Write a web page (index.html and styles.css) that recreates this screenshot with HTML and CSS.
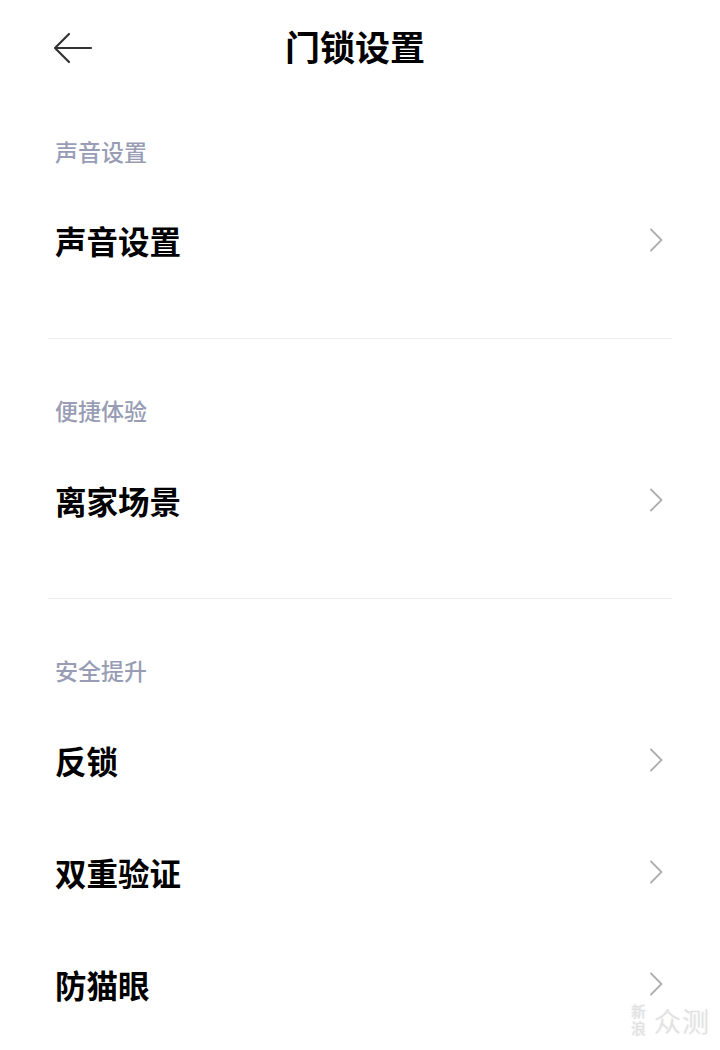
FILE: index.html
```html
<!DOCTYPE html>
<html lang="zh-CN">
<head>
    <meta charset="UTF-8">
    <meta name="viewport" content="width=device-width, initial-scale=1.0">
    <title>门锁设置</title>
    <link rel="stylesheet" href="styles.css">
</head>
<body>
    <div class="page">
        <div class="nav">
            <button class="back" type="button">
                <svg width="40" height="32" viewBox="0 0 40 32">
                    <path d="M2 16 H38 M16 2 L2 16 L16 30" fill="none" stroke="#333" stroke-width="2.2" stroke-linecap="round" stroke-linejoin="round"/>
                </svg>
            </button>
            <h1>门锁设置</h1>
        </div>

        <div class="section first">
            <div class="section-title">声音设置</div>
            <div class="item"><span>声音设置</span><svg class="chevron" width="14" height="24" viewBox="0 0 14 24"><path d="M2 1.5 L12.5 12 L2 22.5" fill="none" stroke="#aeaeae" stroke-width="1.8" stroke-linecap="round" stroke-linejoin="round"/></svg></div>
        </div>

        <div class="section">
            <div class="section-title">便捷体验</div>
            <div class="item"><span>离家场景</span><svg class="chevron" width="14" height="24" viewBox="0 0 14 24"><path d="M2 1.5 L12.5 12 L2 22.5" fill="none" stroke="#aeaeae" stroke-width="1.8" stroke-linecap="round" stroke-linejoin="round"/></svg></div>
        </div>

        <div class="section">
            <div class="section-title">安全提升</div>
            <div class="item"><span>反锁</span><svg class="chevron" width="14" height="24" viewBox="0 0 14 24"><path d="M2 1.5 L12.5 12 L2 22.5" fill="none" stroke="#aeaeae" stroke-width="1.8" stroke-linecap="round" stroke-linejoin="round"/></svg></div>
            <div class="item"><span>双重验证</span><svg class="chevron" width="14" height="24" viewBox="0 0 14 24"><path d="M2 1.5 L12.5 12 L2 22.5" fill="none" stroke="#aeaeae" stroke-width="1.8" stroke-linecap="round" stroke-linejoin="round"/></svg></div>
            <div class="item"><span>防猫眼</span><svg class="chevron" width="14" height="24" viewBox="0 0 14 24"><path d="M2 1.5 L12.5 12 L2 22.5" fill="none" stroke="#aeaeae" stroke-width="1.8" stroke-linecap="round" stroke-linejoin="round"/></svg></div>
        </div>

        <div class="watermark">
            <span class="wm-small">新浪</span>
            <span class="wm-big">众测</span>
        </div>
    </div>
</body>
</html>
```

FILE: styles.css
```css
body {
    margin: 0;
    background: #fff;
    font-family: "Noto Sans CJK SC", "Noto Sans", sans-serif;
    color: #000;
}
.page {
    position: relative;
    width: 720px;
    height: 1050px;
    overflow: hidden;
}
.nav {
    position: relative;
    height: 81px;
    padding-top: 22px;
    box-sizing: border-box;
}
.nav h1 {
    margin: 0;
    font-size: 35px;
    font-weight: 700;
    line-height: 48px;
    text-align: center;
    padding-right: 10px;
}
.back {
    position: absolute;
    left: 53px;
    top: 32px;
    padding: 0;
    border: none;
    background: none;
    line-height: 0;
}
.section {
    margin: 0 48px;
    border-top: 1px solid #ececec;
    padding: 59px 0 42px;
}
.section.first {
    border-top: none;
    padding-top: 58px;
}
.section-title {
    padding: 0 7px;
    font-size: 23px;
    line-height: 24px;
    font-weight: 500;
    color: #989db5;
    margin-bottom: 22px;
}
.section.first .section-title {
    margin-bottom: 21px;
}
.item {
    height: 112px;
    display: flex;
    align-items: center;
    justify-content: space-between;
    padding: 0 9px 0 7px;
    font-size: 31.5px;
    font-weight: 700;
}
.watermark {
    position: absolute;
    right: 10px;
    bottom: 10px;
    display: flex;
    align-items: center;
    gap: 8px;
    color: #e0e0e0;
    text-shadow: 0 0 2px rgba(0, 0, 0, 0.12);
}
.wm-small {
    writing-mode: vertical-rl;
    font-size: 15px;
    line-height: 16px;
    letter-spacing: 2px;
}
.wm-big {
    font-size: 27px;
    font-weight: 300;
    letter-spacing: 1px;
}
```
